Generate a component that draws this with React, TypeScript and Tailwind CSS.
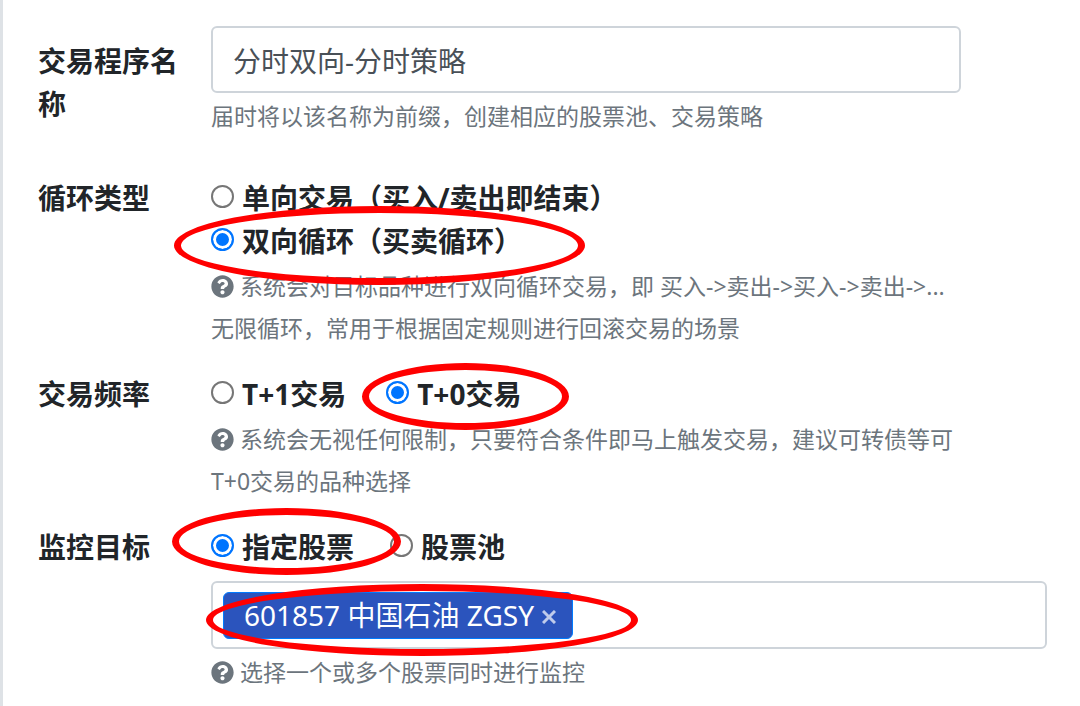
import { useState } from 'react'
import { FaQuestionCircle } from 'react-icons/fa'

type Stock = { code: string; name: string; abbr: string }

const INITIAL_STOCKS: Stock[] = [{ code: '601857', name: '中国石油', abbr: 'ZGSY' }]

export default function App() {
  const [name, setName] = useState('分时双向-分时策略')
  const [loop, setLoop] = useState('double')
  const [freq, setFreq] = useState('t0')
  const [target, setTarget] = useState('stock')
  const [stocks, setStocks] = useState(INITIAL_STOCKS)

  return (
    <form className="flex min-h-screen flex-col gap-6 overflow-hidden border-l-3 border-[#dee2e6] bg-white pt-[26px] pr-[33px] pl-[35px] font-['Noto_Sans','Noto_Sans_CJK_SC',sans-serif] text-[28px] leading-[43px] text-[#212529]">
      <div className="mb-4 flex">
        <label htmlFor="name" className="w-[173px] shrink-0 pt-[14px] pr-6 font-bold">
          交易程序名称
        </label>
        <div className="max-w-[750px] min-w-0 flex-1">
          <input
            id="name"
            type="text"
            value={name}
            onChange={(e) => setName(e.target.value)}
            className="block h-[67px] w-full rounded-md border-2 border-[#ced4da] px-5 text-[#495057] outline-none"
          />
          <Help>届时将以该名称为前缀，创建相应的股票池、交易策略</Help>
        </div>
      </div>

      <Row title="循环类型">
        <div className="max-w-[750px]">
          <div className="flex flex-col items-start">
            <Radio name="loop" value="single" current={loop} onChange={setLoop}>
              单向交易（买入/卖出即结束）
            </Radio>
            <Radio name="loop" value="double" current={loop} onChange={setLoop}>
              双向循环（买卖循环）
              <Mark className="-top-[14px] -left-[37px] h-[79px] w-[411px]" />
            </Radio>
          </div>
          <Help icon>
            系统会对目标品种进行双向循环交易，即 买入-&gt;卖出-&gt;买入-&gt;卖出-&gt;... 无限循环，常用于根据固定规则进行回滚交易的场景
          </Help>
        </div>
      </Row>

      <Row title="交易频率">
        <div className="max-w-[750px]">
          <div className="flex gap-10">
            <Radio name="freq" value="t1" current={freq} onChange={setFreq}>
              T+1交易
            </Radio>
            <Radio name="freq" value="t0" current={freq} onChange={setFreq}>
              T+0交易
              <Mark className="-top-[10px] -left-6 h-[67px] w-[207px]" />
            </Radio>
          </div>
          <Help icon>
            系统会无视任何限制，只要符合条件即马上触发交易，建议可转债等可T+0交易的品种选择
          </Help>
        </div>
      </Row>

      <Row title="监控目标">
        <div className="flex gap-9">
          <Radio name="target" value="stock" current={target} onChange={setTarget}>
            指定股票
            <Mark className="-top-[18px] -left-[39px] h-[67px] w-[229px]" />
          </Radio>
          <Radio name="target" value="pool" current={target} onChange={setTarget}>
            股票池
          </Radio>
        </div>
        <div className="relative mt-3 flex h-[68px] items-center gap-2 rounded-md border-2 border-[#ced4da] px-[10px]">
          {stocks.map((s) => (
            <span
              key={s.code}
              className="flex h-[47px] items-center gap-2 rounded-md border border-[#007bff] bg-[#2b54bd] pr-4 pl-5 text-white"
            >
              {s.code} {s.name} {s.abbr}
              <button
                type="button"
                aria-label={`移除 ${s.name}`}
                onClick={() => setStocks((p) => p.filter((x) => x.code !== s.code))}
                className="text-[#bfcbeb]"
              >
                <svg viewBox="0 0 14 14" className="mt-1 size-[14px]" stroke="currentColor" strokeWidth="3">
                  <path d="M1 1L13 13M13 1L1 13" />
                </svg>
              </button>
            </span>
          ))}
          <input type="text" aria-label="选择股票" className="min-w-0 flex-1 outline-none" />
          <Mark className="top-px -left-[7px] h-[72px] w-[432px]" />
        </div>
        <Help icon>选择一个或多个股票同时进行监控</Help>
      </Row>
    </form>
  )
}

function Row({ title, children }: { title: string; children: React.ReactNode }) {
  return (
    <div role="group" aria-label={title} className="flex">
      <div className="w-[173px] shrink-0 font-bold">{title}</div>
      <div className="min-w-0 flex-1">{children}</div>
    </div>
  )
}

function Radio({
  name, value, current, onChange, children,
}: {
  name: string
  value: string
  current: string
  onChange: (v: string) => void
  children: React.ReactNode
}) {
  return (
    <label className="relative flex items-center gap-2 font-bold whitespace-nowrap">
      <input
        type="radio"
        name={name}
        value={value}
        checked={current === value}
        onChange={() => onChange(value)}
        className="mb-1 size-[23px] shrink-0 appearance-none rounded-full border-2 border-[#767676] bg-white checked:border-[#0075ff] checked:bg-[#0075ff] checked:shadow-[inset_0_0_0_3px_white]"
      />
      {children}
    </label>
  )
}

function Help({ icon, children }: { icon?: boolean; children: React.ReactNode }) {
  return (
    <p className="mt-[2px] text-[23px] leading-[42px] text-[#6c757d]">
      {icon && <FaQuestionCircle className="mr-[6px] mb-1 inline size-[23px]" />}
      {children}
    </p>
  )
}

// red ring around the options to pay attention to
function Mark({ className }: { className: string }) {
  return (
    <span
      aria-hidden="true"
      className={`pointer-events-none absolute z-10 rounded-[50%] border-7 border-[#ff0000] ${className}`}
    />
  )
}
